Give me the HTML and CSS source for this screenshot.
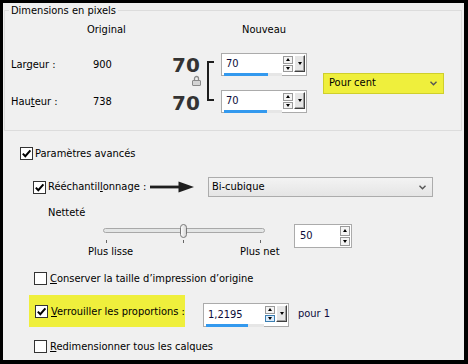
FILE: index.html
```html
<!DOCTYPE html>
<html lang="fr">
<head>
  <meta charset="UTF-8">
  <title>Redimensionner</title>
  <link rel="stylesheet" href="styles.css">
</head>
<body>
  <div class="dialog">
    <div class="group">
      <div class="legend">Dimensions en pixels</div>
      <div class="dims">
        <div class="head orig">Original</div>
        <div class="head nouv">Nouveau</div>

        <div class="lbl row1">Lar<u>g</u>eur :</div>
        <div class="val row1">900</div>
        <div class="lbl row2">Hau<u>t</u>eur :</div>
        <div class="val row2">738</div>

        <div class="bigcol">
          <div class="big">70</div>
          <svg class="lock" width="9" height="11" viewBox="0 0 9 11">
            <path d="M2.5 5.5V3.5a2 2 0 0 1 4 0v2" fill="none" stroke="#8a8a8a" stroke-width="1.3"/>
            <rect x="0.5" y="5.5" width="8" height="5" rx="0.5" fill="#d4d4d4" stroke="#8a8a8a"/>
          </svg>
          <div class="big">70</div>
        </div>

        <div class="bracket"></div>

        <div class="spin row1 sp-new">
          <div class="spin-field">
            <div class="spin-text">70</div>
            <div class="spin-bar"><div class="spin-fill" style="width:76%"></div></div>
          </div>
          <div class="updown">
            <div class="ud up"></div>
            <div class="ud down"></div>
          </div>
          <div class="drop"></div>
        </div>

        <div class="spin row2 sp-new">
          <div class="spin-field">
            <div class="spin-text">70</div>
            <div class="spin-bar"><div class="spin-fill" style="width:74%"></div></div>
          </div>
          <div class="updown">
            <div class="ud up"></div>
            <div class="ud down"></div>
          </div>
          <div class="drop"></div>
        </div>

        <div class="select yellow unit">
          <span>Pour cent</span>
          <svg width="7" height="5" viewBox="0 0 7 5"><path d="M0.5 0.8 3.5 3.8 6.5 0.8" fill="none" stroke="#555" stroke-width="1.4"/></svg>
        </div>
      </div>
    </div>

    <div class="opt row-a">
      <span class="cb on"><svg width="11" height="11" viewBox="0 0 11 11"><path d="M1.8 5.6 4.3 8.2 9.4 2.4" fill="none" stroke="#000" stroke-width="2"/></svg></span>
      <span class="txt">Paramètres avancés</span>
    </div>

    <div class="opt row-b">
      <span class="cb on"><svg width="11" height="11" viewBox="0 0 11 11"><path d="M1.8 5.6 4.3 8.2 9.4 2.4" fill="none" stroke="#000" stroke-width="2"/></svg></span>
      <span class="txt resample">Rééchantil<u>l</u>onnage :</span>
      <svg class="arrow" width="44" height="12" viewBox="0 0 44 12">
        <rect x="0" y="4.6" width="30" height="2.8" fill="#1e1e1e"/>
        <polygon points="28.5,0.5 44,6 28.5,11.5" fill="#1e1e1e"/>
      </svg>
      <div class="select method">
        <span>Bi-cubique</span>
        <svg width="7" height="5" viewBox="0 0 7 5"><path d="M0.5 0.8 3.5 3.8 6.5 0.8" fill="none" stroke="#555" stroke-width="1.4"/></svg>
      </div>
    </div>

    <div class="opt row-c">Netteté</div>

    <div class="opt row-d">
      <div class="slider">
        <div class="track"></div>
        <div class="thumb"></div>
        <div class="ticks"><i></i><i></i><i></i></div>
        <div class="ends"><span>Plus lisse</span><span>Plus net</span></div>
      </div>
      <div class="spin plain">
        <div class="spin-field"><div class="spin-text">50</div></div>
        <div class="updown tall">
          <div class="ud up"></div>
          <div class="ud down"></div>
        </div>
      </div>
    </div>

    <div class="opt row-e">
      <span class="cb"></span>
      <span class="txt gap3"><u>C</u>onserver la taille d’impression d’origine</span>
    </div>

    <div class="opt row-f">
      <div class="hl">
        <span class="cb on"><svg width="11" height="11" viewBox="0 0 11 11"><path d="M1.8 5.6 4.3 8.2 9.4 2.4" fill="none" stroke="#000" stroke-width="2"/></svg></span>
        <span class="txt gap3"><u>V</u>errouiller les proportions :</span>
      </div>
      <div class="spin ratio">
        <div class="spin-field">
          <div class="spin-text">1,2195</div>
          <div class="spin-bar"><div class="spin-fill" style="width:71%"></div></div>
        </div>
        <div class="updown">
          <div class="ud up"></div>
          <div class="ud down hot"></div>
        </div>
        <div class="drop"></div>
      </div>
      <span class="per">pour 1</span>
    </div>

    <div class="opt row-g">
      <span class="cb"></span>
      <span class="txt gap3"><u>R</u>edimensionner tous les calques</span>
    </div>
  </div>
</body>
</html>
```

FILE: styles.css
```css
* {
  box-sizing: border-box;
}
body {
  margin: 0;
  background: #000;
}
.dialog {
  width: 468px;
  height: 364px;
  border-style: solid;
  border-color: #000;
  border-width: 3px 4px 4px 3px;
  background: #f0f0f0;
  font-family: "DejaVu Sans Condensed", "DejaVu Sans", sans-serif;
  font-size: 11px;
  line-height: 14px;
  color: #000;
  overflow: hidden;
}
u {
  text-decoration-thickness: 1px;
}

/* group box */
.group {
  margin: 7px 2px 0 1px;
  height: 121px;
  border: 1px solid #dcdcdc;
}
.legend {
  width: fit-content;
  margin: -7px 0 0 4px;
  padding: 0 2px;
  background: #f0f0f0;
}
.dims {
  display: grid;
  grid-template-columns: 76px 85px 33px 16px 86px 16px 121px;
  grid-template-rows: 14px 16px 23px 14px 23px;
  padding: 5px 0 0 6px;
}
.head {
  grid-row: 1;
}
.orig {
  grid-column: 2;
}
.nouv {
  grid-column: 5;
  text-align: center;
}
.row1 {
  grid-row: 3;
}
.row2 {
  grid-row: 5;
}
.lbl {
  grid-column: 1;
  align-self: center;
}
.val {
  grid-column: 2;
  align-self: center;
  padding-left: 6px;
}
.bigcol {
  grid-column: 3;
  grid-row: 3 / 6;
  display: flex;
  flex-direction: column;
  align-items: flex-start;
  padding-top: 4px;
}
.big {
  font-family: "DejaVu Sans", sans-serif;
  font-weight: bold;
  font-size: 20px;
  line-height: 17px;
  color: #333;
}
.lock {
  display: block;
  margin: 1px 0 9px 20px;
}
.bracket {
  grid-column: 4;
  grid-row: 3 / 6;
  align-self: start;
  width: 7px;
  height: 40px;
  margin: 8px 0 0 2px;
  border: 2px solid #1e1e1e;
  border-right: none;
}
.sp-new {
  grid-column: 5;
}
.unit {
  grid-column: 7;
  grid-row: 3 / 6;
  align-self: center;
}

/* spin boxes */
.spin {
  display: flex;
  align-items: flex-start;
  width: 86px;
  height: 23px;
  padding: 1px;
  border: 1px solid #ababab;
  background: #fff;
  color: #0c0c3a;
}
.spin-field {
  display: flex;
  flex-direction: column;
  width: 60px;
  height: 100%;
}
.spin-text {
  flex: 1;
  padding-left: 3px;
  line-height: 18px;
}
.spin-bar {
  flex: none;
  height: 3px;
  margin-left: 1px;
  background: #e6e6e6;
}
.spin-fill {
  height: 100%;
  background: #3399ee;
}
.updown {
  display: flex;
  flex-direction: column;
  width: 10px;
  height: 16px;
  margin: 1px 0 0 1px;
}
.ud {
  flex: 1;
  display: flex;
  align-items: center;
  justify-content: center;
  border: 1px solid #9a9a9a;
  background: #f4f4f4;
}
.ud + .ud {
  margin-top: 1px;
}
.ud::before {
  content: "";
  border-left: 2.5px solid transparent;
  border-right: 2.5px solid transparent;
}
.up::before {
  border-bottom: 3px solid #000;
}
.down::before {
  border-top: 3px solid #000;
}
.ud.hot {
  border-color: #3c7fb1;
  background: #dcecfc;
}
.drop {
  display: flex;
  justify-content: center;
  padding-top: 6px;
  width: 11px;
  height: 17px;
  margin-left: 1px;
  background: #e6e6e6;
  border-style: solid;
  border-width: 1px;
  border-color: #fff #404040 #404040 #fff;
  box-shadow: inset -1px -1px 0 #a0a0a0;
}
.drop::before {
  content: "";
  height: 0;
  border-left: 2.5px solid transparent;
  border-right: 2.5px solid transparent;
  border-top: 3px solid #000;
}
.spin.plain {
  width: 58px;
  height: 24px;
  align-items: center;
}
.spin.plain .spin-field {
  width: 44px;
}
.spin.plain .spin-text {
  padding-left: 4px;
  line-height: 20px;
}
.updown.tall {
  width: 10px;
  height: 20px;
  margin: 0 0 0 1px;
}
.spin.ratio {
  height: 24px;
  margin: 8px 0 0 18px;
}
.spin.ratio .spin-field {
  width: 61px;
}
.spin.ratio .spin-text {
  line-height: 19px;
}

/* drop-down lists */
.select {
  display: flex;
  align-items: center;
  justify-content: space-between;
  padding: 0 6px 0 4px;
  border: 1px solid #acacac;
  background: linear-gradient(#f3f3f3, #e5e5e5);
}
.select svg {
  display: block;
}
.select.yellow {
  height: 21px;
  padding-left: 5px;
  border-color: #cfcf2c;
  background: #efef3c;
}
.select.method {
  width: 225px;
  height: 20px;
  margin-left: 14px;
  padding-left: 3px;
}

/* options below the group */
.opt {
  display: flex;
  align-items: center;
}
.cb {
  flex: none;
  display: flex;
  align-items: center;
  justify-content: center;
  width: 13px;
  height: 13px;
  border: 1px solid #333;
  background: #fff;
}
.cb svg {
  display: block;
}
.txt {
  margin-left: 2px;
}
.txt.gap3 {
  margin-left: 3px;
}
.row-a {
  height: 13px;
  margin-top: 16px;
  padding-left: 17px;
}
.row-b {
  height: 20px;
  margin-top: 17px;
  padding-left: 30px;
}
.resample {
  width: 102px;
}
.arrow {
  display: block;
}
.row-c {
  margin-top: 9px;
  padding-left: 45px;
}
.row-d {
  align-items: flex-start;
  margin-top: 4px;
  padding-left: 85px;
}
.slider {
  position: relative;
  width: 192px;
  padding-top: 4px;
}
.track {
  width: 162px;
  height: 5px;
  margin-left: 15px;
  border: 1px solid #a8a8a8;
  border-radius: 3px;
  background: #e4e6e6;
}
.thumb {
  position: absolute;
  left: 92px;
  top: 0;
  width: 7px;
  height: 14px;
  border: 1px solid #777;
  border-radius: 4px;
  background: linear-gradient(to right, #fcfcfc, #d6d6d6);
}
.ticks {
  display: flex;
  justify-content: space-between;
  width: 155px;
  margin: 7px 0 0 18px;
}
.ticks i {
  width: 1px;
  height: 3px;
  background: #666;
}
.ends {
  display: grid;
  grid-template-columns: 152px auto;
  margin-top: 2px;
}
.row-d .spin.plain {
  margin-left: 14px;
}
.row-e {
  height: 13px;
  margin-top: 13px;
  padding-left: 31px;
}
.row-f {
  align-items: flex-start;
  height: 32px;
  margin-top: 10px;
  padding-left: 26px;
}
.hl {
  display: flex;
  align-items: center;
  width: 156px;
  height: 32px;
  padding: 1px 0 0 6px;
  background: #efef3c;
}
.per {
  margin: 12px 0 0 9px;
  color: #0c0c3a;
}
.row-g {
  height: 13px;
  margin-top: 13px;
  padding-left: 31px;
}
```
